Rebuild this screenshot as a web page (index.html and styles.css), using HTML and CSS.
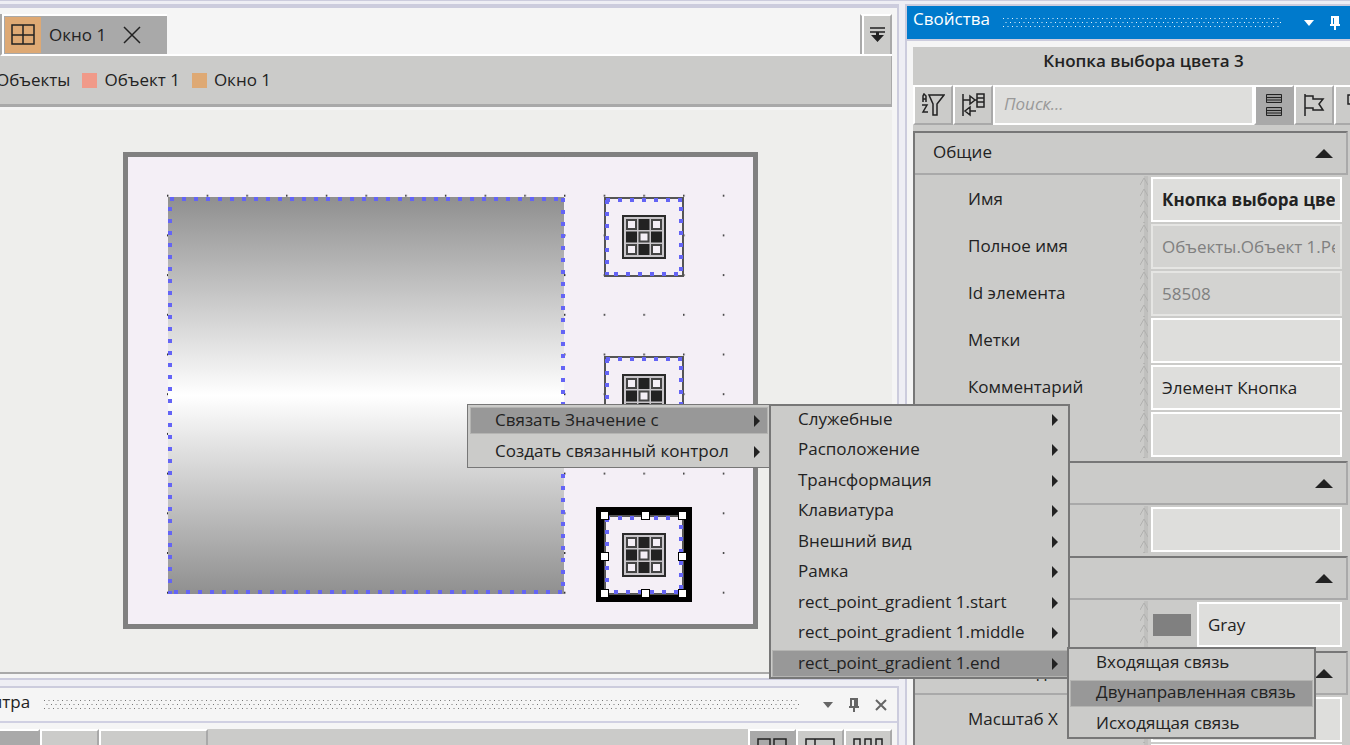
FILE: index.html
```html
<!DOCTYPE html>
<html lang="ru">
<head>
<meta charset="utf-8">
<title>Окно 1</title>
<link rel="stylesheet" href="styles.css">
</head>
<body>
<svg class="defs" width="0" height="0" aria-hidden="true">
  <defs>
    <pattern id="grip-dark" width="9" height="12" patternUnits="userSpaceOnUse">
      <path fill="#777" d="M0 1h1v1h-1zM4.500 1h1v1h-1zM2.500 5h1v1h-1zM7 5h1v1h-1zM0 9h1v1h-1zM4.500 9h1v1h-1z"/>
    </pattern>
    <pattern id="grip-light" width="9" height="12" patternUnits="userSpaceOnUse">
      <path fill="#e4f2fc" d="M0 1h1v1h-1zM4.500 1h1v1h-1zM2.500 5h1v1h-1zM7 5h1v1h-1zM0 9h1v1h-1zM4.500 9h1v1h-1z"/>
    </pattern>
    <pattern id="chevrons" width="8" height="11" patternUnits="userSpaceOnUse">
      <rect x="4" width="4" height="11" fill="#c0c0be"/>
      <path d="M0 9l4-7 4 7" fill="none" stroke="#b0b0ae"/>
    </pattern>
    <linearGradient id="metal" x1="0" y1="0" x2="0" y2="1">
      <stop offset="0" stop-color="#8f8f8f"/><stop offset=".5" stop-color="#fff"/><stop offset="1" stop-color="#8f8f8f"/>
    </linearGradient>
    <pattern id="grid" x="44" y="3" width="39.7" height="39.7" patternUnits="userSpaceOnUse">
      <rect width="1.4" height="2" fill="#333"/>
    </pattern>
    <symbol id="picker" viewBox="0 0 80 80" overflow="visible">
      <rect x="1" y="1" width="78" height="78" fill="#f4eff6" stroke="#555" stroke-width="2"/>
      <g stroke="#6464f5" stroke-width="4" stroke-dasharray="4 8" fill="none">
        <path d="M2 3h78M3 3v75M77 10v68M10 77h68"/>
      </g>
      <rect x="19" y="19" width="42" height="42" fill="#c9c6ca" stroke="#2b2b2b" stroke-width="2"/>
      <path fill="#444" d="M22 22h11v11h-11zM47 22h11v11h-11zM34.500 34.500h11v11h-11zM22 47h11v11h-11zM47 47h11v11h-11z"/>
      <path fill="#222" d="M34.500 22h11v11h-11zM22 34.500h11v11h-11zM47 34.500h11v11h-11zM34.500 47h11v11h-11z"/>
      <path fill="#f4eff6" d="M24 24h7v7h-7zM49 24h7v7h-7zM36.500 36.500h7v7h-7zM24 49h7v7h-7zM49 49h7v7h-7z"/>
    </symbol>
  </defs>
</svg>

<div class="app">
  <main class="workspace">
    <section class="document">
      <div class="tabs">
        <div class="tab">
          <svg class="tab-icon" viewBox="0 0 36 36" width="36" height="36"><path d="M7 8h22v19H7zM18 8v19M7 18h22" fill="none" stroke="#222" stroke-width="1.500"/></svg>
          <span class="tab-name">Окно 1</span>
          <button class="plain" aria-label="Закрыть"><svg width="18" height="18"><path d="M1 1l16 16M17 1L1 17" stroke="#222" stroke-width="1.500"/></svg></button>
        </div>
        <button class="tab-list" aria-label="Список вкладок"><svg width="16" height="16"><path d="M0 1h15M0 5h15" stroke="#222" stroke-width="1.500"/><path d="M6 5h3v3h5l-6.500 7L1 8h5z" fill="#222"/></svg></button>
      </div>
      <nav class="crumbs">
        <a href="#" class="crumb">Объекты</a>
        <a href="#" class="crumb"><i class="chip coral"></i>Объект 1</a>
        <a href="#" class="crumb"><i class="chip amber"></i>Окно 1</a>
      </nav>
      <div class="canvas">
        <svg width="635" height="477">
          <rect x="2.500" y="2.500" width="630" height="472" fill="#f4eff6" stroke="#808080" stroke-width="5"/>
          <rect x="44" y="5" width="580" height="450" fill="url(#grid)"/>
          <rect x="45" y="45" width="396" height="397" fill="url(#metal)"/>
          <g stroke="#6464f5" stroke-width="4" stroke-dasharray="4 8" fill="none">
            <path d="M47 47h394M47 55v387M440 46v396M51 440h390"/>
          </g>
          <use href="#picker" x="481" y="45" width="80" height="80"/>
          <use href="#picker" x="481" y="204" width="80" height="80"/>
          <rect x="473" y="355" width="96" height="95" fill="#000"/>
          <use href="#picker" x="481" y="363" width="80" height="80"/>
          <g fill="#fff" stroke="#000">
            <rect x="477.500" y="359.500" width="8" height="8"/><rect x="518.500" y="359.500" width="8" height="8"/><rect x="555.500" y="359.500" width="8" height="8"/>
            <rect x="477.500" y="400.500" width="8" height="8"/><rect x="555.500" y="400.500" width="8" height="8"/>
            <rect x="477.500" y="437.500" width="8" height="8"/><rect x="518.500" y="437.500" width="8" height="8"/><rect x="555.500" y="437.500" width="8" height="8"/>
          </g>
        </svg>
      </div>
    </section>
    <section class="palette">
      <header class="palette-head">
        <h2 class="palette-title">Палитра</h2>
        <svg class="grip" height="11"><rect width="100%" height="11" fill="url(#grip-dark)"/></svg>
        <button class="plain" aria-label="Меню"><svg width="10" height="6"><path d="M0 0h10L5 6z" fill="#666"/></svg></button>
        <button class="plain" aria-label="Закрепить"><svg width="10" height="14"><path d="M1 0h8v8h1v2H6v4H4v-4H0V8h1zM3 2v6h2V2z" fill="#666"/></svg></button>
        <button class="plain" aria-label="Закрыть"><svg width="12" height="12"><path d="M1 1l10 10M11 1L1 11" stroke="#666" stroke-width="2"/></svg></button>
      </header>
      <div class="palette-bar">
        <button class="tool palette-a active" aria-label="Раздел 1"></button>
        <button class="tool palette-b" aria-label="Раздел 2"></button>
        <button class="tool palette-c" aria-label="Раздел 3"></button>
        <span class="fill"></span>
        <button class="tool palette-d active" aria-label="Крупные"><svg width="32" height="30"><path d="M2 1h12v12H2zM18 1h12v12H18z" fill="none" stroke="#222" stroke-width="1.500"/></svg></button>
        <button class="tool palette-d" aria-label="Список"><svg width="32" height="30"><path d="M2 1h28v14H2zM11 1v14" fill="none" stroke="#222" stroke-width="1.500"/></svg></button>
        <button class="tool palette-d" aria-label="Столбцы"><svg width="32" height="30"><path d="M2 1h6v14H2zM13 1h6v14h-6zM24 1h6v14h-6z" fill="none" stroke="#222" stroke-width="1.500"/></svg></button>
      </div>
    </section>
  </main>

  <aside class="dock">
    <header class="dock-head">
      <h2 class="dock-title">Свойства</h2>
      <svg class="grip" height="11"><rect width="100%" height="11" fill="url(#grip-light)"/></svg>
      <button class="plain" aria-label="Меню"><svg width="10" height="6"><path d="M0 0h10L5 6z" fill="#fff"/></svg></button>
      <button class="plain" aria-label="Закрепить"><svg width="10" height="14"><path d="M1 0h8v8h1v2H6v4H4v-4H0V8h1zM3 2v6h1V2z" fill="#fff"/></svg></button>
    </header>
    <div class="props">
      <h3 class="object-name">Кнопка выбора цвета 3</h3>
      <div class="toolbar">
        <button class="tool" aria-label="Сортировка"><svg width="24" height="24" fill="none" stroke="#222" stroke-width="1.500"><path d="M8 2h15l-7 9v11h-4V11z"/><path d="M2 9V3l1-2 2 2v6M2 6h3M1 12h5l-4 7h5"/></svg></button>
        <button class="tool" aria-label="Связи"><svg width="24" height="24" fill="none" stroke="#222" stroke-width="1.500"><path d="M2 1v22M2 7h7M9 3l5 4-5 4zM16 1h7v13h-7zM16 5h7M16 9h7M14 7h2M15 18H9M9 14l-5 4 5 4z"/></svg></button>
        <input class="search" type="search" placeholder="Поиск..." aria-label="Поиск">
        <button class="tool active" aria-label="Группы"><svg width="18" height="24" fill="#999"><path d="M1 1h16v9H1zM1 14h16v9H1z"/><path d="M1.500 1.500h15v8h-15zM1 4.500h15M1 7h15M1.500 14.500h15v8h-15zM1 17.500h15M1 20h15" stroke="#222"/></svg></button>
        <button class="tool" aria-label="Флаг"><svg width="22" height="24" fill="none" stroke="#222" stroke-width="1.500"><path d="M2 1v22M2 3h8v3h10l-4 5 4 6H10v-2H2"/></svg></button>
        <button class="tool" aria-label="Ещё"><svg width="20" height="24" fill="none" stroke="#222" stroke-width="1.500"><path d="M4 2h14v9H4z"/></svg></button>
      </div>
      <div class="groups">
        <section>
          <button class="group-head"><span>Общие</span><svg width="18" height="9"><path d="M0 9L9 0l9 9z" fill="#222"/></svg></button>
          <div class="rows">
            <div class="row"><label for="p1">Имя</label><svg class="split"><rect width="8" height="100%" fill="url(#chevrons)"/></svg><input id="p1" class="field strong" value="Кнопка выбора цвета 3"></div>
            <div class="row"><label for="p2">Полное имя</label><svg class="split"><rect width="8" height="100%" fill="url(#chevrons)"/></svg><input id="p2" class="field" disabled value="Объекты.Объект 1.Ресурсы"></div>
            <div class="row"><label for="p3">Id элемента</label><svg class="split"><rect width="8" height="100%" fill="url(#chevrons)"/></svg><input id="p3" class="field" disabled value="58508"></div>
            <div class="row"><label for="p4">Метки</label><svg class="split"><rect width="8" height="100%" fill="url(#chevrons)"/></svg><input id="p4" class="field"></div>
            <div class="row"><label for="p5">Комментарий</label><svg class="split"><rect width="8" height="100%" fill="url(#chevrons)"/></svg><input id="p5" class="field" value="Элемент Кнопка"></div>
            <div class="row"><span></span><svg class="split"><rect width="8" height="100%" fill="url(#chevrons)"/></svg><input class="field" aria-label="Значение"></div>
          </div>
        </section>
        <section>
          <button class="group-head" aria-label="Группа 2"><span></span><svg width="18" height="9"><path d="M0 9L9 0l9 9z" fill="#222"/></svg></button>
          <div class="rows">
            <div class="row"><span></span><svg class="split"><rect width="8" height="100%" fill="url(#chevrons)"/></svg><input class="field" aria-label="Значение"></div>
          </div>
        </section>
        <section>
          <button class="group-head" aria-label="Группа 3"><span></span><svg width="18" height="9"><path d="M0 9L9 0l9 9z" fill="#222"/></svg></button>
          <div class="rows">
            <div class="row"><span></span><svg class="split"><rect width="8" height="100%" fill="url(#chevrons)"/></svg><div class="color"><i class="swatch"></i><input class="field" aria-label="Цвет" value="Gray"></div></div>
          </div>
        </section>
        <section>
          <button class="group-head"><span>Внешний вид</span><svg width="18" height="9"><path d="M0 9L9 0l9 9z" fill="#222"/></svg></button>
          <div class="rows">
            <div class="row"><label for="p9">Масштаб X</label><svg class="split"><rect width="8" height="100%" fill="url(#chevrons)"/></svg><input id="p9" class="field"></div>
            <div class="row"><span></span><svg class="split"><rect width="8" height="100%" fill="url(#chevrons)"/></svg><input class="field" aria-label="Значение"></div>
          </div>
        </section>
      </div>
    </div>
  </aside>
</div>

<div class="menu menu-root" role="menu">
  <button class="item current" role="menuitem">Связать Значение с<i class="arrow"></i></button>
  <button class="item" role="menuitem">Создать связанный контрол<i class="arrow"></i></button>
</div>
<div class="menu menu-groups" role="menu">
  <button class="item" role="menuitem">Служебные<i class="arrow"></i></button>
  <button class="item" role="menuitem">Расположение<i class="arrow"></i></button>
  <button class="item" role="menuitem">Трансформация<i class="arrow"></i></button>
  <button class="item" role="menuitem">Клавиатура<i class="arrow"></i></button>
  <button class="item" role="menuitem">Внешний вид<i class="arrow"></i></button>
  <button class="item" role="menuitem">Рамка<i class="arrow"></i></button>
  <button class="item" role="menuitem">rect_point_gradient 1.start<i class="arrow"></i></button>
  <button class="item" role="menuitem">rect_point_gradient 1.middle<i class="arrow"></i></button>
  <button class="item current" role="menuitem">rect_point_gradient 1.end<i class="arrow"></i></button>
</div>
<div class="menu menu-links" role="menu">
  <button class="item" role="menuitem">Входящая связь</button>
  <button class="item current" role="menuitem">Двунаправленная связь</button>
  <button class="item" role="menuitem">Исходящая связь</button>
</div>
</body>
</html>
```
FILE: styles.css
```css
* { box-sizing: border-box; }
body {
  margin: 0;
  height: 100vh;
  overflow: hidden;
  position: relative;
  background: #eeeef4;
  color: #222;
  font: 17px/24px "Open Sans", "Noto Sans", sans-serif;
}
button, input { font: inherit; color: inherit; margin: 0; border-radius: 0; }
button { padding: 0; border: 0; text-align: left; }
h2, h3 { margin: 0; font-size: 17px; font-weight: 400; }
svg { display: block; flex: none; }
.defs { position: absolute; }
.plain { background: none; display: flex; }

.app { height: 100%; display: flex; gap: 6px; padding-top: 3px; border-top: 1px solid #ccccdd; }
.workspace { flex: 1; min-width: 0; display: flex; flex-direction: column; gap: 6px; overflow: hidden; }

.document {
  flex: 1;
  min-height: 0;
  display: flex;
  flex-direction: column;
  background: #f5f5f5;
  border: solid #ccccdd;
  border-width: 4px 2px 2px 0;
  padding: 6px 5px 4px 0;
}
.tabs { display: flex; justify-content: space-between; height: 42px; border-bottom: 2px solid #fff; border-left: 2px solid #a9a9a9; }
.tab {
  display: flex;
  align-items: center;
  width: 165px;
  padding-left: 1px;
  background: #a9a9a9;
  border-top: 2px solid #fff;
  border-left: 2px solid #fff;
}
.tab-icon { background: #dea974; }
.tab-name { flex: 1; padding-left: 8px; }
.tab .plain { margin-right: 26px; }
.tab-list {
  width: 32px;
  display: flex;
  align-items: center;
  justify-content: center;
  padding-left: 3px;
  background: #cbcbc9;
  border: 2px solid #a9a9a9;
  border-top-color: #fff;
  border-bottom: 0;
  box-shadow: inset 2px 0 #fff;
}
.crumbs {
  flex: none;
  height: 51px;
  display: flex;
  align-items: center;
  gap: 12px;
  background: #cbcbc9;
  border: solid #a9a9a9;
  border-width: 0 1px 3px 0;
}
.crumb { display: flex; align-items: center; gap: 7px; color: #222; text-decoration: none; }
.crumb:first-child { margin-left: -4px; }
.chip { width: 15px; height: 15px; }
.coral { background: #f09a89; }
.amber { background: #dea974; }
.canvas { flex: 1; min-height: 0; margin-top: 3px; padding: 42px 0 0 123px; background: #eeeeec; border-bottom: 2px solid #a9a9a9; overflow: hidden; }

.palette { flex: none; display: flex; flex-direction: column; background: #f5f5f5; border: solid #ccccdd; border-width: 2px 2px 0 0; }
.palette-head { display: flex; align-items: center; gap: 16px; height: 35px; padding-right: 10px; border-bottom: 2px solid #d0d0e2; }
.palette-title { margin: -6px 0 0 -40px; width: 68px; }
.grip { flex: 1; min-width: 0; }
.palette-head .grip { margin-right: 8px; }
.palette-bar { display: flex; height: 16px; margin: 6px 5px 0 0; background: #cbcbc9; overflow: hidden; }
.fill { flex: 1; }

.tool {
  flex: none;
  width: 40px;
  height: 40px;
  display: flex;
  align-items: center;
  justify-content: center;
  background: #cbcbc9;
  border: 2px solid #a9a9a9;
  border-top-color: #fff;
  border-left-color: #fff;
}
.active { background: #a9a9a9; }
.palette-a { width: 40px; border-left: 0; }
.palette-b { width: 59px; }
.palette-c { width: 109px; }
.palette-d { width: 48px; align-items: flex-start; padding-top: 7px; }

.dock { width: 445px; flex: none; display: flex; flex-direction: column; overflow: hidden; background: #f5f5f5; border-left: 2px solid #ccccdd; border-top: 2px solid #ccccdd; }
.dock-head { flex: none; display: flex; align-items: center; gap: 22px; height: 35px; padding: 0 10px 0 6px; background: #007acc; color: #fff; border-bottom: 2px solid #ccccdd; }
.dock-title { margin-top: -8px; width: 76px; }
.dock-head .grip { margin-left: -8px; }
.dock-head .plain:last-child { margin-left: -6px; }
.props { flex: 1; min-height: 0; margin: 6px 0 0 6px; background: #cbcbc9; overflow: hidden; }
.object-name { height: 38px; padding: 2px 0 0 24px; text-align: center; font-weight: 600; }
.toolbar { display: flex; }
.search {
  flex: 1;
  min-width: 0;
  height: 40px;
  padding: 0 9px 3px;
  background: #dededc;
  border: 2px solid #fff;
}
.search::placeholder { color: #999; font-style: italic; opacity: 1; }
.toolbar .tool:last-child { margin-right: -24px; }

.groups { margin: 6px 2px 0 0; border-left: 2px solid #777; }
.group-head {
  width: 100%;
  height: 44px;
  display: flex;
  align-items: center;
  justify-content: space-between;
  padding: 0 13px 0 18px;
  background: #cbcbc9;
  border: solid #a9a9a9;
  border-width: 2px 2px 2px 0;
  border-top-color: #777;
}
.group-head span { padding-bottom: 2px; }
.rows { display: flex; flex-direction: column; gap: 2px; padding: 1px 6px 5px 0; }
.row { display: grid; grid-template-columns: 225px 8px 1fr; height: 45px; align-items: center; }
.row label { padding: 0 0 2px 53px; }
.split { width: 8px; height: 47px; }
.field {
  width: auto;
  min-width: 0;
  height: 45px;
  margin-left: 3px;
  padding: 0 5px 0 9px;
  background: #dededc;
  border: 2px solid #fff;
}
.field:disabled { background: #d3d3d1; border-color: #e5e5e3; color: #808080; }
.strong { font-weight: 700; }
.color { display: flex; align-items: center; padding-left: 5px; gap: 3px; min-width: 0; }
.swatch { flex: none; width: 38px; height: 22px; background: #808080; }
.color .field { flex: 1; }

.menu {
  position: absolute;
  display: flex;
  flex-direction: column;
  justify-content: space-between;
  background: #cbcbc9;
  border: 2px solid #777;
}
.menu-root { left: 467px; top: 404px; width: 304px; height: 64px; padding: 2px; border-width: 1px; }
.menu-groups { left: 769px; top: 404px; width: 301px; height: 275px; padding-left: 1px; }
.menu-links { left: 1067px; top: 647px; width: 249px; height: 92px; padding: 0 1px; }
.item {
  height: 27px;
  display: flex;
  align-items: center;
  justify-content: space-between;
  padding: 0 10px 2px 26px;
  background: none;
  white-space: nowrap;
}
.menu-root .item { padding-right: 8px; padding-left: 25px; }
.current { background: #989898; outline: 1px solid #b4b4b2; outline-offset: -1px; }
.arrow { margin-top: 2px; border: solid transparent; border-width: 6px 0 6px 6px; border-left-color: #222; }
```
